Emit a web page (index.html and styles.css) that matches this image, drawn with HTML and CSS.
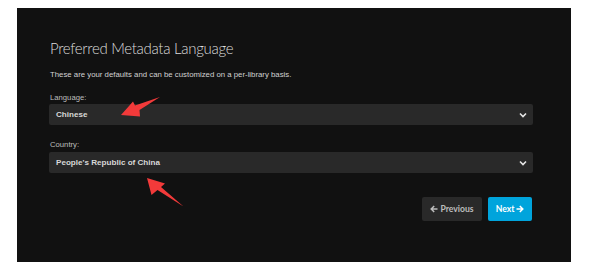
FILE: index.html
```html
<!DOCTYPE html>
<html>
<head>
<meta charset="utf-8">
<link rel="stylesheet" href="styles.css">
</head>
<body>
<div class="panel">
  <h1 class="title">Preferred Metadata Language</h1>
  <p class="sub">These are your defaults and can be customized on a per-library basis.</p>
  <div class="field">
    <div class="label">Language:</div>
    <div class="select">
      <span>Chinese</span>
      <svg class="chev" width="8" height="6" viewBox="0 0 8 6"><path d="M1 1.5 L4 4.5 L7 1.5" fill="none" stroke="#e6e6e6" stroke-width="1.6"/></svg>
    </div>
  </div>
  <div class="field field2">
    <div class="label">Country:</div>
    <div class="select">
      <span>People's Republic of China</span>
      <svg class="chev" width="8" height="6" viewBox="0 0 8 6"><path d="M1 1.5 L4 4.5 L7 1.5" fill="none" stroke="#e6e6e6" stroke-width="1.6"/></svg>
    </div>
  </div>
  <div class="actions">
    <div class="btn btn-prev">
      <svg width="8" height="8" viewBox="0 0 8 8"><path d="M7.5 4 H1.5 M4.2 1 L1.2 4 L4.2 7" fill="none" stroke="#bdbdbd" stroke-width="1.5"/></svg>
      <span>Previous</span>
    </div>
    <div class="btn btn-next">
      <span>Next</span>
      <svg width="8" height="8" viewBox="0 0 8 8"><path d="M0.5 4 H6.5 M3.8 1 L6.8 4 L3.8 7" fill="none" stroke="#ffffff" stroke-width="1.5"/></svg>
    </div>
  </div>
</div>
<svg class="arrows" width="595" height="271" viewBox="0 0 595 271">
  <polygon fill="#f23a3a" points="121,115 133,101.5 135,105.5 160,97 139.5,110 140,116.5"/>
  <polygon fill="#f23a3a" points="147,178 165,183.5 161,187 183.5,206.5 157.5,190 151.5,195"/>
</svg>
</body>
</html>
```
FILE: styles.css
```css
html, body {
  margin: 0;
  padding: 0;
  background: #ffffff;
}
body {
  width: 595px;
  height: 271px;
  position: relative;
  font-family: "Liberation Sans", Arial, sans-serif;
}
.panel {
  margin-left: 17px;
  margin-top: 8px;
  width: 554px;
  height: 254px;
  box-sizing: border-box;
  padding: 30px 38px 0 32px;
  background: #111111;
  display: flex;
  flex-direction: column;
}
.title {
  margin: 0 0 0 1px;
  font-family: "Lato", sans-serif;
  font-weight: 300;
  font-size: 15px;
  line-height: 20px;
  color: #dcdcdc;
  letter-spacing: -0.3px;
}
.sub {
  margin: 12px 0 0 1px;
  font-size: 7.8px;
  line-height: 10px;
  color: #d2d2d2;
}
.field {
  margin-top: 13px;
  display: flex;
  flex-direction: column;
}
.field2 {
  margin-top: 15px;
}
.label {
  font-size: 7.7px;
  line-height: 10px;
  color: #bdbdbd;
  margin-left: 1px;
}
.select {
  margin-top: 1px;
  height: 21px;
  background: #292929;
  border-radius: 2px;
  display: flex;
  align-items: center;
  justify-content: space-between;
  padding: 0 6px 0 7px;
  font-size: 8.1px;
  font-weight: bold;
  color: #d8d8d8;
}
.field2 .select {
  margin-top: 2px;
}
.chev {
  display: block;
}
.actions {
  margin-top: 24px;
  display: flex;
  justify-content: flex-end;
  gap: 6px;
  padding-right: 1px;
}
.btn {
  height: 24px;
  box-sizing: border-box;
  border-radius: 2px;
  display: flex;
  align-items: center;
  justify-content: center;
  gap: 2px;
  font-family: "Lato", sans-serif;
  font-weight: bold;
  font-size: 8.6px;
}
.btn svg {
  display: block;
}
.btn-prev {
  width: 60px;
  background: #292929;
  color: #bdbdbd;
}
.btn-next {
  width: 44px;
  background: #00a4dc;
  color: #ffffff;
}
.arrows {
  position: absolute;
  left: 0;
  top: 0;
  pointer-events: none;
}
```
